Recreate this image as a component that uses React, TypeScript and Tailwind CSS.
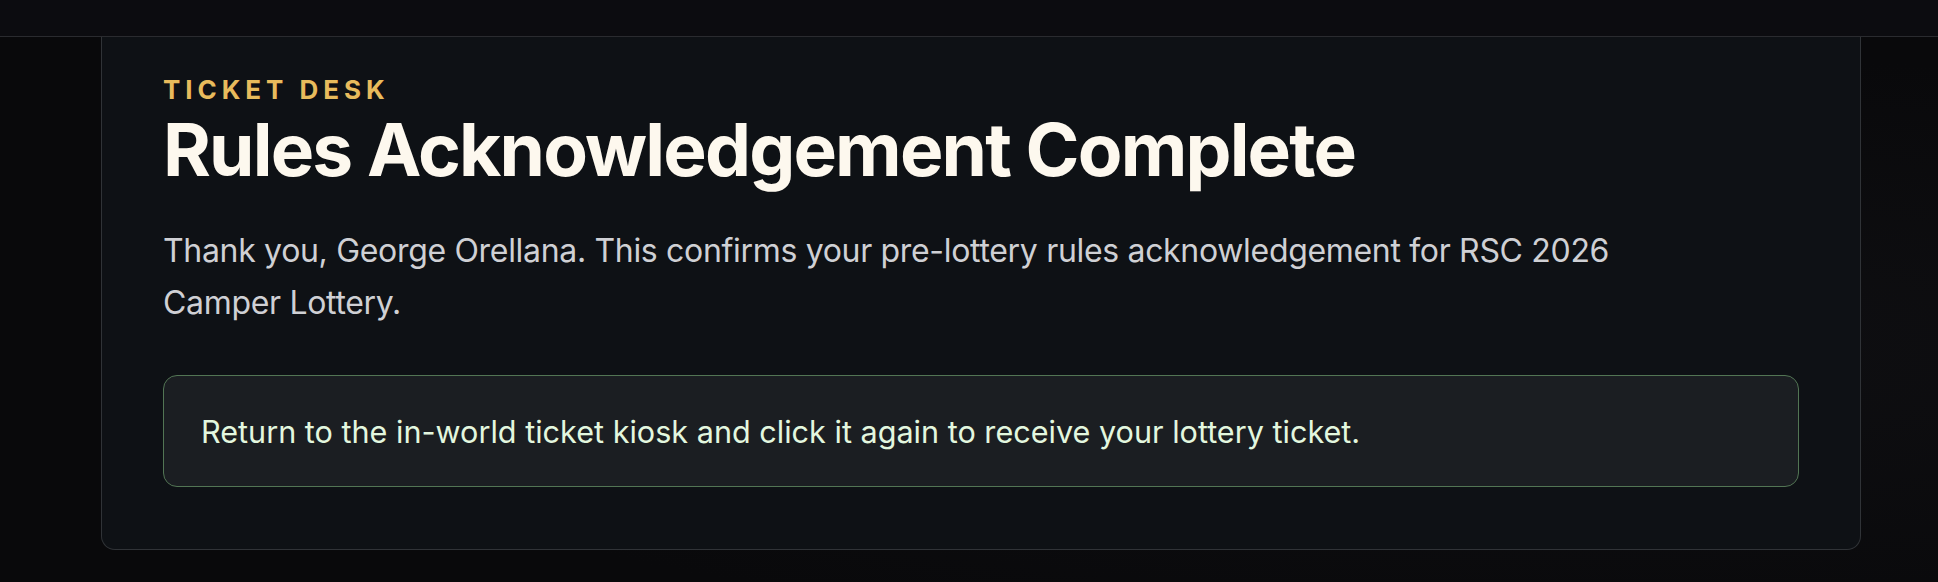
import React from "react";

export default function App() {
  return (
    <div
      className="w-[1938px] h-[582px] overflow-hidden bg-[#09090b] bg-[radial-gradient(ellipse_at_80%_60%,#0f0f12_0%,#09090b_60%)]"
      style={{ fontFamily: "Inter, 'Noto Sans', sans-serif" }}
    >
      <header className="h-[37px] bg-[#0c0c10] border-b border-[#2a2b2f]" />
      <main className="ml-[101px] w-[1760px]">
        <section className="bg-[#0e1115] border border-t-0 border-[#303337] rounded-b-[14px] px-[61px] pt-[40px] pb-[62px]">
          <p className="text-[26px] leading-[26px] font-bold tracking-[0.19em] text-[#e8bb5c] uppercase">
            Ticket Desk
          </p>
          <h1 className="mt-[7px] text-[73px] leading-[80px] font-bold tracking-[-0.025em] text-[#fdf8ee]">
            Rules Acknowledgement Complete
          </h1>
          <p className="mt-[35px] max-w-[1480px] text-[32px] leading-[52px] tracking-[-0.01em] text-[#cfd0d4]">
            Thank you, George Orellana. This confirms your pre-lottery rules acknowledgement for RSC 2026 Camper Lottery.
          </p>
          <div className="mt-[46px] rounded-[14px] border border-[#527554] bg-[#1b1e22] px-[37px] pt-[33px] pb-[31px]">
            <p className="text-[30.6px] leading-[46px] text-[#e3f7df]">
              Return to the in-world ticket kiosk and click it again to receive your lottery ticket.
            </p>
          </div>
        </section>
      </main>
    </div>
  );
}
